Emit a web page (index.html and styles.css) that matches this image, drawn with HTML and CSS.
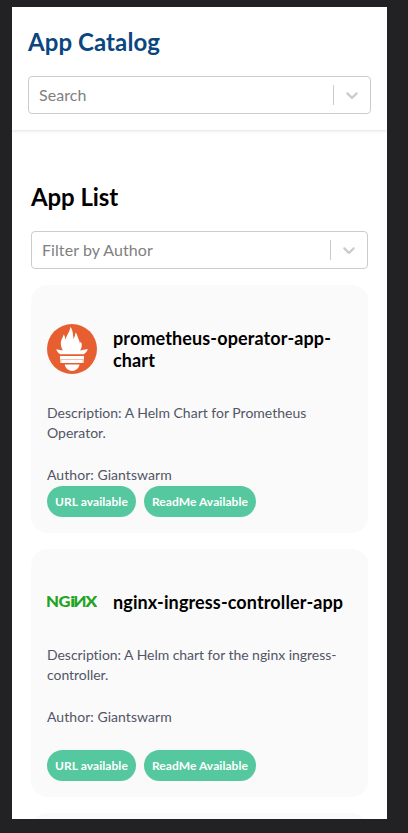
FILE: index.html
```html
<!DOCTYPE html>
<html lang="en">
<head>
<meta charset="utf-8">
<title>App Catalog</title>
<link rel="stylesheet" href="styles.css">
</head>
<body>
<div class="screen">
  <header class="header">
    <h1 class="title">App Catalog</h1>
    <div class="select">
      <span class="placeholder">Search</span>
      <span class="separator"></span>
      <svg class="chevron" viewBox="0 0 20 20"><path d="M4.516 7.548c0.436-0.446 1.043-0.481 1.576 0l3.908 3.747 3.908-3.747c0.533-0.481 1.141-0.446 1.574 0 0.436 0.445 0.408 1.197 0 1.615-0.406 0.418-4.695 4.502-4.695 4.502-0.217 0.223-0.502 0.335-0.787 0.335s-0.57-0.112-0.789-0.335c0 0-4.287-4.084-4.695-4.502s-0.436-1.17 0-1.615z"/></svg>
    </div>
  </header>
  <main class="list">
    <h2 class="list-title">App List</h2>
    <div class="select">
      <span class="placeholder">Filter by Author</span>
      <span class="separator"></span>
      <svg class="chevron" viewBox="0 0 20 20"><path d="M4.516 7.548c0.436-0.446 1.043-0.481 1.576 0l3.908 3.747 3.908-3.747c0.533-0.481 1.141-0.446 1.574 0 0.436 0.445 0.408 1.197 0 1.615-0.406 0.418-4.695 4.502-4.695 4.502-0.217 0.223-0.502 0.335-0.787 0.335s-0.57-0.112-0.789-0.335c0 0-4.287-4.084-4.695-4.502s-0.436-1.17 0-1.615z"/></svg>
    </div>
    <article class="card">
      <div class="card-head">
        <svg class="logo" viewBox="0 0 50 50">
          <circle cx="25" cy="25" r="25" fill="#e75e30"/>
          <path fill="#fff" d="M13.200 30.300C11.200 28.700 9.800 27.200 9.200 25.200l6.600 1.200c-1.500-3-2.300-5.500-1.900-8.500.4-2.500 2-4.400 2.800-7.400 1.300 1.600 1.400 3.400 1.900 5 .6-3 2-4.800 3.100-7.200.9-1.800 1.500-3.400 1.600-5.300 1.500 1.700 2.200 3.800 2.500 6.300.3 2 .5 4 .8 5.600 1-1.900 1.700-4 2-6.300 1.400 1.800 1.900 3.600 2.600 5.600 1 2.200 1.500 3.300 1.700 5.200.4-.6.700-1.200.9-2 1.400 2.600 1.500 6-.7 9l7.700-1.300c-.5 2.200-2 3.800-4 5.200z"/>
          <path fill="#fff" d="M13 32h24v3H13zM14.500 36h21v2.900h-21zM17.700 40.600h14.800c-.8 4-3.700 6.300-7.300 6.300s-6.700-2.300-7.500-6.300z"/>
          <path fill="#fff" fill-opacity=".6" d="M13 35h24v4H13z"/>
        </svg>
        <h3 class="name">prometheus-operator-app-chart</h3>
      </div>
      <p class="description">Description: A Helm Chart for Prometheus Operator.</p>
      <p class="author">Author: Giantswarm</p>
      <div class="badges"><span class="badge">URL available</span><span class="badge">ReadMe Available</span></div>
    </article>
    <article class="card">
      <div class="card-head">
        <svg class="logo wordmark" viewBox="0 0 50 50">
          <text x="-1" y="30" textLength="13" lengthAdjust="spacingAndGlyphs">N</text>
          <text x="11.500" y="30" textLength="12" lengthAdjust="spacingAndGlyphs">G</text>
          <text x="23" y="30" textLength="5.500" lengthAdjust="spacingAndGlyphs">i</text>
          <text x="-39.500" y="30" transform="scale(-1 1)" textLength="13" lengthAdjust="spacingAndGlyphs">N</text>
          <text x="38.200" y="30" textLength="12.200" lengthAdjust="spacingAndGlyphs">X</text>
        </svg>
        <h3 class="name">nginx-ingress-controller-app</h3>
      </div>
      <p class="description long">Description: A Helm chart for the nginx ingress-controller.</p>
      <p class="author">Author: Giantswarm</p>
      <div class="badges"><span class="badge">URL available</span><span class="badge">ReadMe Available</span></div>
    </article>
    <article class="card"></article>
  </main>
</div>
</body>
</html>
```
FILE: styles.css
```css
* { box-sizing: border-box; }
html { background: #222224; }
body {
  margin: 0;
  height: 833px;
  padding: 7px 21px 14px 12px;
  overflow: hidden;
  font-family: Lato, sans-serif;
  font-variant-ligatures: none;
}
h1, h2, h3, p { margin: 0; }
.screen {
  height: 812px;
  overflow: hidden;
  background: #fff;
}
.header {
  height: 123px;
  padding: 20px 16px 0;
  box-shadow: 0 1px 3px rgba(0, 0, 0, .12);
}
.title {
  margin-bottom: 19px;
  color: #0b4680;
  font-size: 24px;
  line-height: 30px;
  letter-spacing: .08px;
}
.select {
  display: flex;
  align-items: center;
  height: 38px;
  padding: 0 8px 0 10px;
  border: 1px solid #ccc;
  border-radius: 4px;
  background: #fff;
}
.placeholder {
  flex: 1;
  padding-bottom: 2px;
  color: #808080;
  font-size: 16px;
  letter-spacing: .08px;
}
.separator {
  width: 1px;
  height: 20px;
  margin-right: 8px;
  background: #ccc;
}
.chevron { width: 20px; height: 20px; fill: #ccc; }
.list { padding: 52px 19px 0; }
.list-title {
  margin-bottom: 19px;
  color: #000;
  font-size: 24px;
  line-height: 30px;
  letter-spacing: -.08px;
}
.card {
  display: flex;
  flex-direction: column;
  height: 248px;
  margin-top: 16px;
  padding: 16px;
  border-radius: 16px;
  background: #fafafa;
}
.card-head {
  display: flex;
  align-items: center;
  gap: 16px;
  padding: 26px 0;
}
.logo {
  flex: none;
  width: 50px;
  height: 50px;
  margin: -14px 0;
}
.wordmark {
  fill: #23a422;
  font: 900 15px Lato, sans-serif;
}
.name {
  color: #000;
  font-size: 18px;
  line-height: 22px;
  letter-spacing: .12px;
}
.description {
  margin: 6px 0 22px;
  color: #525566;
  font-size: 14px;
  line-height: 20px;
}
.description.long { letter-spacing: -.04px; }
.author {
  color: #525566;
  font-size: 14px;
  line-height: 20px;
  letter-spacing: .05px;
}
.badges {
  display: flex;
  gap: 8px;
  margin-top: auto;
}
.badge {
  height: 31px;
  padding: 0 8px;
  border-radius: 16px;
  background: #55c8a0;
  color: #fff;
  font-size: 12px;
  font-weight: 700;
  line-height: 31px;
  letter-spacing: .07px;
}
```
